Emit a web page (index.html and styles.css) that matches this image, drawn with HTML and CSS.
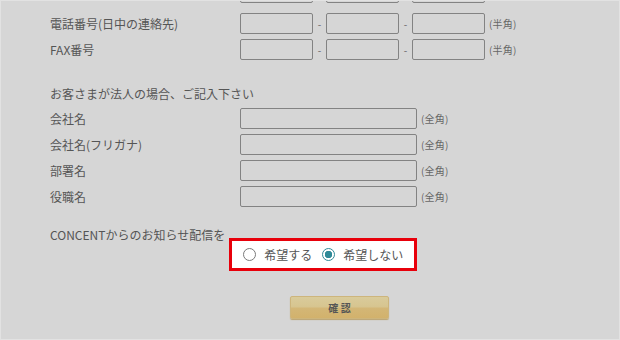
FILE: index.html
```html
<!DOCTYPE html>
<html lang="ja">
<head>
  <meta charset="UTF-8">
  <title>お問い合わせ</title>
  <link rel="stylesheet" href="styles.css">
</head>
<body>
  <div class="page">
    <form class="form">
      <!-- 上の行（画面外に切れている） -->
      <div class="row row-cut">
        <div class="label"></div>
        <div class="field">
          <input class="inp tel" type="text"><span class="sep"></span>
          <input class="inp tel" type="text"><span class="sep"></span>
          <input class="inp tel" type="text">
        </div>
      </div>
      <div class="row">
        <div class="label">電話番号(日中の連絡先)</div>
        <div class="field">
          <input class="inp tel" type="text"><span class="sep">-</span>
          <input class="inp tel" type="text"><span class="sep">-</span>
          <input class="inp tel" type="text"><span class="note">(半角)</span>
        </div>
      </div>
      <div class="row row-last">
        <div class="label">FAX番号</div>
        <div class="field">
          <input class="inp tel" type="text"><span class="sep">-</span>
          <input class="inp tel" type="text"><span class="sep">-</span>
          <input class="inp tel" type="text"><span class="note">(半角)</span>
        </div>
      </div>

      <div class="section">お客さまが法人の場合、ご記入下さい</div>
      <div class="row">
        <div class="label">会社名</div>
        <div class="field"><input class="inp wide" type="text"><span class="note">(全角)</span></div>
      </div>
      <div class="row">
        <div class="label">会社名(フリガナ)</div>
        <div class="field"><input class="inp wide" type="text"><span class="note">(全角)</span></div>
      </div>
      <div class="row">
        <div class="label">部署名</div>
        <div class="field"><input class="inp wide" type="text"><span class="note">(全角)</span></div>
      </div>
      <div class="row">
        <div class="label">役職名</div>
        <div class="field"><input class="inp wide" type="text"><span class="note">(全角)</span></div>
      </div>

      <div class="notice">
        <div class="notice-label">CONCENTからのお知らせ配信を</div>
        <div class="choice">
          <label class="opt"><input type="radio" name="mail" value="yes"><span>希望する</span></label>
          <label class="opt"><input type="radio" name="mail" value="no" checked><span>希望しない</span></label>
        </div>
      </div>

      <div class="actions">
        <button type="button" class="btn">確 認</button>
      </div>
    </form>
  </div>
</body>
</html>
```

FILE: styles.css
```css
html, body {margin: 0;padding: 0;background: #d6d6d6;}
body {font-family: "Noto Sans CJK JP", "Liberation Sans", sans-serif;font-size: 12px;color: #555;}
.page {width: 620px;height: 340px;box-sizing: border-box;border: 1px solid #e2e2e2;overflow: hidden;padding-left: 49px;}

.row {display: flex;align-items: center;height: 21px;margin-bottom: 5px;}
.row-cut {margin-top: -19px;margin-bottom: 10px;}
.row-last {margin-bottom: 0;}
.label {width: 190px;flex: none;line-height: 18px;white-space: nowrap;}
.field {display: flex;align-items: center;}

.inp {box-sizing: border-box;height: 21px;margin: 0;padding: 0 3px;background: #d6d6d6;border: 1px solid #838383;border-radius: 2px;font: inherit;}
.inp.tel {width: 73px;}
.inp.wide {width: 177px;}
.sep {width: 13px;text-align: center;font-size: 10px;color: #666;}
.note {margin-left: 4px;font-size: 10px;color: #666;letter-spacing: 0.02em;}

.section {margin: 25px 0 5px;line-height: 18px;color: #555;}

.notice {display: flex;align-items: flex-start;margin-top: 19px;}
.notice-label {line-height: 18px;white-space: nowrap;}
.choice {display: flex;align-items: center;gap: 10px;margin: 12px 0 0 4px;height: 27px;padding: 0 11px;background: #fff;border: 3px solid #e8000b;}
.opt {display: flex;align-items: center;gap: 8px;line-height: 18px;color: #555;}
.opt input {appearance: none;-webkit-appearance: none;margin: 0;width: 13px;height: 13px;border: 1px solid #7a7a7a;border-radius: 50%;background: #fff;box-sizing: border-box;}
.opt input:checked {border: 1px solid #2f8a98;background: radial-gradient(circle, #2f8a98 0, #2f8a98 3.5px, #fff 4px);}

.actions {margin: 25px 0 0 240px;}
.btn {
  width: 99px;height: 23px;padding: 0;border: 1px solid #cdb57c;border-radius: 2px;
  background: linear-gradient(#d9cb9b 0, #d7c590 45%, #d3b676 55%, #d2b26c 100%);
  font-family: inherit;font-size: 10px;font-weight: bold;color: #555;cursor: pointer;
  box-shadow: 0 1px 1px #bba46f;
}
```
